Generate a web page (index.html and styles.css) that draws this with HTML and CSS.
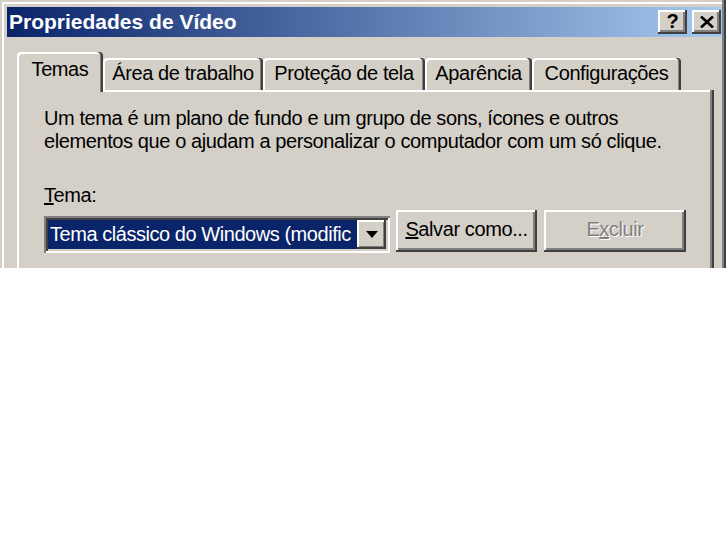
FILE: index.html
```html
<!DOCTYPE html>
<html lang="pt-BR">
<head>
<meta charset="utf-8">
<title>Propriedades de Vídeo</title>
<link rel="stylesheet" href="styles.css">
</head>
<body>
<div class="window">
  <div class="titlebar">
    <span class="title">Propriedades de Vídeo</span>
    <div class="tb-buttons">
      <span class="tb-btn tb-help">?</span>
      <span class="tb-btn tb-close">
        <svg width="14" height="12" viewBox="0 0 14 12"><path d="M1 0.5 L13 11.5 M13 0.5 L1 11.5" stroke="#000" stroke-width="2.6" fill="none"/></svg>
      </span>
    </div>
  </div>
  <div class="content">
    <div class="tabs">
      <div class="tab tab-active tab-temas">Temas</div>
      <div class="tab tab-area">Área de trabalho</div>
      <div class="tab tab-protecao">Proteção de tela</div>
      <div class="tab tab-aparencia">Aparência</div>
      <div class="tab tab-config">Configurações</div>
    </div>
    <div class="panel">
      <p class="desc">Um tema é um plano de fundo e um grupo de sons, ícones e outros<br>elementos que o ajudam a personalizar o computador com um só clique.</p>
      <div class="label"><u>T</u>ema:</div>
      <div class="row">
        <div class="combo">
          <div class="combo-field"><span class="combo-text">Tema clássico do Windows (modific</span></div>
          <div class="combo-btn">
            <svg width="12" height="7" viewBox="0 0 12 7"><path d="M0 0 H12 L6 7 Z" fill="#000"/></svg>
          </div>
        </div>
        <div class="btn btn-save"><u>S</u>alvar como...</div>
        <div class="btn btn-delete disabled">E<u>x</u>cluir</div>
      </div>
    </div>
  </div>
</div>
</body>
</html>
```
FILE: styles.css
```css
* { box-sizing: border-box; }

body {
  margin: 0;
  background: #ffffff;
  font-family: "Liberation Sans", Arial, sans-serif;
  font-size: 20px;
  letter-spacing: -0.4px;
  color: #000;
}

.window {
  width: 726px;
  height: 268px;
  overflow: hidden;
  background: #d4d0c8;
  padding: 7px 4px 0 7px;
  box-shadow:
    inset -2px 0 #404040,
    inset -4px 0 #808080,
    inset 2px 2px #d4d0c8,
    inset 4px 4px #ffffff;
}

.titlebar {
  height: 30px;
  display: flex;
  align-items: center;
  padding-left: 2px;
  padding-right: 1px;
  background: linear-gradient(to right, #0a246a, #a6caf0);
}

.title {
  color: #ffffff;
  font-weight: bold;
  font-size: 21px;
  letter-spacing: 0;
  white-space: nowrap;
}

.tb-buttons {
  margin-left: auto;
  display: flex;
  gap: 5px;
}

.tb-btn {
  width: 29px;
  height: 24px;
  background: #d4d0c8;
  display: flex;
  align-items: center;
  justify-content: center;
  font-weight: bold;
  font-size: 20px;
  letter-spacing: 0;
  box-shadow:
    inset -2px -2px #404040,
    inset 2px 2px #ffffff,
    inset -4px -4px #808080;
}

.tb-help { padding-bottom: 1px; }

.content {
  margin-top: 15px;
  padding-left: 10px;
}

.tabs {
  display: flex;
  align-items: flex-end;
  height: 38px;
}

.tab {
  height: 32px;
  display: flex;
  align-items: center;
  justify-content: center;
  padding-bottom: 1px;
  white-space: nowrap;
  border-radius: 4px 4px 0 0;
  background: #d4d0c8;
  box-shadow:
    inset -2px 0 #404040,
    inset -3px 0 #808080,
    inset 2px 2px #ffffff;
}

.tab-active {
  height: 40px;
  margin-bottom: -2px;
  padding-bottom: 6px;
  position: relative;
  z-index: 1;
}

.tab-temas { width: 86px; }
.tab-area { width: 160px; }
.tab-protecao { width: 162px; }
.tab-aparencia { width: 107px; }
.tab-config { width: 149px; }

.panel {
  width: 697px;
  height: 200px;
  background: #d4d0c8;
  padding: 17px 0 0 27px;
  box-shadow:
    inset -2px 0 #404040,
    inset -4px 0 #808080,
    inset 2px 2px #ffffff;
}

.desc {
  margin: 0;
  line-height: 23px;
}

.label {
  margin-top: 31px;
  line-height: 23px;
}

.row {
  margin-top: 3px;
  display: flex;
  align-items: flex-start;
}

.combo {
  margin-top: 6px;
  width: 346px;
  height: 37px;
  padding: 4px;
  display: flex;
  background: #ffffff;
  box-shadow:
    inset 2px 2px #808080,
    inset -2px -2px #ffffff,
    inset 4px 4px #404040,
    inset -4px -4px #d4d0c8;
}

.combo-field {
  flex: 1;
  min-width: 0;
  overflow: hidden;
  background: #0a246a;
  color: #ffffff;
  display: flex;
  align-items: center;
  padding-left: 2px;
  white-space: nowrap;
}

.combo-text {
  white-space: nowrap;
  letter-spacing: -0.45px;
}

.combo-btn {
  width: 29px;
  height: 29px;
  flex: none;
  background: #d4d0c8;
  display: flex;
  align-items: center;
  justify-content: center;
  box-shadow:
    inset -2px -2px #404040,
    inset 2px 2px #ffffff,
    inset -3px -3px #808080;
}

.btn {
  height: 42px;
  display: flex;
  align-items: center;
  justify-content: center;
  padding-bottom: 3px;
  white-space: nowrap;
  background: #d4d0c8;
  box-shadow:
    inset -2px -2px #404040,
    inset 2px 2px #ffffff,
    inset -4px -4px #808080;
}

.btn-save {
  margin-left: 6px;
  width: 141px;
}

.btn-delete {
  margin-left: 7px;
  width: 142px;
}

.disabled {
  color: #808080;
  text-shadow: 1px 1px #ffffff;
}
```
